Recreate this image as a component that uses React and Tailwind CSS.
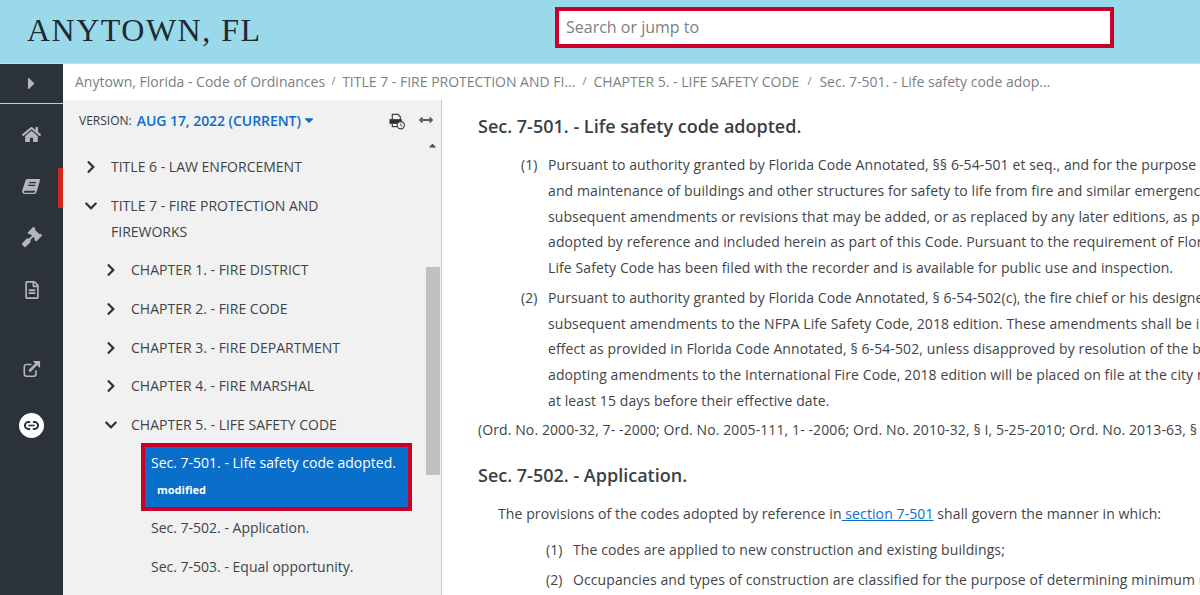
import React from 'react';
import { FaCaretDown, FaCaretRight, FaCaretUp, FaChevronDown, FaChevronRight, FaHome, FaGavel, FaRegFileAlt, FaArrowsAltH } from 'react-icons/fa';

function BookIcon() {
  return (
    <svg viewBox="0 0 20 18" className="w-[19px] h-[17px]" fill="currentColor">
      <path fillRule="evenodd" d="M5.500 1h12.300c.9 0 1.400.7 1.100 1.600l-3.300 11.600c-.4 1.400-1.500 2.800-3 2.800H3c-1.700 0-3-1.300-2.900-3 .1-.6.2-1.200.4-1.800L3.700 2.600C4 1.700 4.600 1 5.500 1zM7.600 4.300l-.4 1.300h7.400l.4-1.300zM6.700 7.200l-.4 1.300h7.400l.4-1.300zM3.400 13.400c-1 0-1.300.5-1.300 1.100 0 .6.400 1 1.100 1h9.100c.8 0 1.200-.5 1.400-1.100l.2-1z" />
    </svg>
  );
}

function ExternalIcon() {
  return (
    <svg viewBox="0 0 20 20" className="w-[19px] h-[18px]" fill="none" stroke="currentColor">
      <path d="M15 11.500v4a2.500 2.500 0 0 1-2.500 2.500h-8A2.500 2.500 0 0 1 2 15.500v-8A2.500 2.500 0 0 1 4.500 5H10" strokeWidth="1.800" />
      <path d="M7.500 12.500l8.500-8.500" strokeWidth="3" />
      <path d="M11.500 1H19.500v8z" fill="currentColor" stroke="none" />
    </svg>
  );
}

function LinkBadge() {
  return (
    <div className="w-[25px] h-[25px] rounded-full bg-white flex items-center justify-center">
      <svg viewBox="0 0 16 10" className="w-[15px] h-[9px]" fill="none" stroke="#2b323a">
        <path d="M6.500 1.200H4.500a3.800 3.800 0 0 0 0 7.600h2M9.500 1.200h2a3.800 3.800 0 0 1 0 7.600h-2" strokeWidth="2.200" />
        <path d="M4.500 5h7" strokeWidth="1.800" />
      </svg>
    </div>
  );
}

function PrintIcon() {
  return (
    <svg viewBox="0 0 18 18" className="w-[17px] h-[17px]" fill="none">
      <path d="M3.500 7V1.500h6l2.500 2.500v3" stroke="#3f4448" strokeWidth="1.300" />
      <rect x="0.500" y="6.500" width="13" height="5" fill="#2b323a" />
      <path d="M3.500 11.500v3h5" stroke="#3f4448" strokeWidth="1.300" />
      <circle cx="12.500" cy="13" r="3.800" fill="#f1f1f1" stroke="#3f4448" strokeWidth="1.200" />
      <path d="M12.500 11v2.300l1.500 1" stroke="#3f4448" />
    </svg>
  );
}

function RailIcon({ children, className = '' }) {
  return <div className={`flex justify-center text-[#b4b6b8] ${className}`}>{children}</div>;
}

function Sidebar() {
  return (
    <aside className="w-[63px] shrink-0 bg-[#2b323a] flex flex-col">
      <div className="h-[40px] flex items-center justify-center border-b border-[#c9cbcd] text-[#b4b6b8]">
        <FaCaretRight size={19} />
      </div>
      <RailIcon className="h-[19px] mt-[21px]"><FaHome size={19} /></RailIcon>
      <div className="relative mt-[24px] h-[40px]">
        <RailIcon className="pt-[10px]"><BookIcon /></RailIcon>
        <div className="absolute right-0 top-0 w-[5px] h-[40px] bg-[#d0291c]" />
      </div>
      <RailIcon className="h-[20px] mt-[19px]"><FaGavel size={20} /></RailIcon>
      <RailIcon className="h-[18px] mt-[34px]"><FaRegFileAlt size={18} /></RailIcon>
      <RailIcon className="h-[18px] mt-[61px]"><ExternalIcon /></RailIcon>
      <div className="flex justify-center mt-[35px]"><LinkBadge /></div>
    </aside>
  );
}

function TreeRow({ open, indent, lines }) {
  const Chevron = open ? FaChevronDown : FaChevronRight;
  return (
    <div className={`flex py-[6.4px] leading-[26px] text-[14px] text-[#3f4448] ${indent ? 'pl-[41px]' : 'pl-[21px]'}`}>
      <span className="w-[27px] shrink-0 h-[26px] flex items-center text-[#2b323a]">
        <Chevron size={14} />
      </span>
      <span>
        {lines.map((l) => <div key={l}>{l}</div>)}
      </span>
    </div>
  );
}

function TreePanel() {
  return (
    <div className="relative w-[379px] shrink-0 bg-[#f1f1f1] border-r border-[#c8c8c8] overflow-hidden">
      <div className="flex items-center h-[40px] pl-[16px] pr-[8px]">
        <span className="text-[12px] text-[#333a40] mr-[5px] mt-[1px]">VERSION:</span>
        <span className="text-[14px] text-[#0a6ecb] font-semibold tracking-[-0.05px] mt-[1px]">AUG 17, 2022 (CURRENT)</span>
        <FaCaretDown size={14} className="text-[#0a6ecb] ml-[1px]" />
        <span className="ml-auto mr-[13px] mt-[2px]"><PrintIcon /></span>
        <FaArrowsAltH size={14} className="text-[#5a5f63]" />
      </div>
      <div className="pt-[8px]">
        <TreeRow lines={['TITLE 6 - LAW ENFORCEMENT']} />
        <div className="mb-[-1px]">
          <TreeRow open lines={['TITLE 7 - FIRE PROTECTION AND', 'FIREWORKS']} />
        </div>
        <TreeRow indent lines={['CHAPTER 1. - FIRE DISTRICT']} />
        <TreeRow indent lines={['CHAPTER 2. - FIRE CODE']} />
        <TreeRow indent lines={['CHAPTER 3. - FIRE DEPARTMENT']} />
        <TreeRow indent lines={['CHAPTER 4. - FIRE MARSHAL']} />
        <TreeRow indent open lines={['CHAPTER 5. - LIFE SAFETY CODE']} />
        <div className="ml-[78px] w-[271px] h-[68px] mt-[-1px] border-4 border-[#c8002a] bg-[#0a6ecb] text-white pl-[6px]">
          <div className="text-[14px] leading-[26px] mt-[3px] whitespace-nowrap">Sec. 7-501. - Life safety code adopted.</div>
          <div className="text-[11px] font-bold leading-[14px] pl-[6px] mt-[7px]">modified</div>
        </div>
        <div className="ml-[88px] mt-[4px] text-[14px] leading-[26px] text-[#3f4448]">Sec. 7-502. - Application.</div>
        <div className="ml-[88px] mt-[13px] text-[14px] leading-[26px] text-[#3f4448]">Sec. 7-503. - Equal opportunity.</div>
      </div>
      {/* scrollbar sits over the tree */}
      <FaCaretUp size={11} className="absolute left-[364px] top-[40px] text-[#4a4a4a]" />
      <div className="absolute left-[363px] top-[167px] w-[14px] h-[208px] bg-[#c1c1c1]" />
    </div>
  );
}

function Clause({ num, lines, numLeft = 'pl-[43px]' }) {
  return (
    <div className={`flex ${numLeft}`}>
      <span className="w-[27px] shrink-0 tracking-normal">{num}</span>
      <div>
        {lines.map((l) => <div key={l} className="whitespace-nowrap">{l}</div>)}
      </div>
    </div>
  );
}

function Content() {
  return (
    <main className="flex-1 min-w-0 overflow-hidden bg-white pl-[36px] text-[14px] leading-[25.750px] tracking-[0.1px] text-[#3f4448]">
      <h2 className="text-[18px] tracking-normal font-semibold text-[#3a3f44] mt-[13px] leading-[26px]">Sec. 7-501. - Life safety code adopted.</h2>
      <div className="mt-[13px]">
        <Clause num="(1)" lines={[
          'Pursuant to authority granted by Florida Code Annotated, §§ 6-54-501 et seq., and for the purpose of providing for the inspection',
          'and maintenance of buildings and other structures for safety to life from fire and similar emergencies, the city adopts the code,',
          'subsequent amendments or revisions that may be added, or as replaced by any later editions, as provided by the state, and is',
          'adopted by reference and included herein as part of this Code. Pursuant to the requirement of Florida Code Annotated, a copy of the',
          'Life Safety Code has been filed with the recorder and is available for public use and inspection.',
        ]} />
        <div className="mt-[4px]">
          <Clause num="(2)" lines={[
            'Pursuant to authority granted by Florida Code Annotated, § 6-54-502(c), the fire chief or his designee may adopt',
            'subsequent amendments to the NFPA Life Safety Code, 2018 edition. These amendments shall be in full force and',
            'effect as provided in Florida Code Annotated, § 6-54-502, unless disapproved by resolution of the board. Notice of',
            'adopting amendments to the International Fire Code, 2018 edition will be placed on file at the city recorder office',
            'at least 15 days before their effective date.',
          ]} />
        </div>
      </div>
      <p className="mt-[3px] whitespace-nowrap">(Ord. No. 2000-32, 7- -2000; Ord. No. 2005-111, 1- -2006; Ord. No. 2010-32, § I, 5-25-2010; Ord. No. 2013-63, § I, 2013)</p>
      <h2 className="text-[18px] tracking-normal font-semibold text-[#3a3f44] mt-[20px] leading-[26px]">Sec. 7-502. - Application.</h2>
      <p className="mt-[13px] pl-[20px] whitespace-nowrap">The provisions of the codes adopted by reference in<a className="text-[#0a6ecb] underline"> section 7-501</a> shall govern the manner in which:</p>
      <div className="mt-[10px]">
        <Clause numLeft="pl-[68px]" num="(1)" lines={['The codes are applied to new construction and existing buildings;']} />
        <div className="mt-[4px]">
          <Clause numLeft="pl-[68px]" num="(2)" lines={['Occupancies and types of construction are classified for the purpose of determining minimum requirements;']} />
        </div>
      </div>
    </main>
  );
}

export default function App() {
  return (
    <div className="h-[595px] w-[1200px] overflow-hidden flex flex-col font-['Open_Sans',sans-serif] bg-white">
      <header className="h-[64px] shrink-0 bg-[#99d9ea] flex items-center border-b border-[#d5dcdf]">
        <div className="w-[555px] pl-[27px] font-['Liberation_Serif',serif] text-[32px] text-[#1f2a30] tracking-[1.500px] leading-none mt-[-3px]">ANYTOWN, FL</div>
        <div className="w-[559px] h-[41px] mt-[-9px] border-4 border-[#c8002a] bg-white flex items-center pl-[7px] text-[16px] text-[#7b7f83]">Search or jump to</div>
      </header>
      <div className="flex flex-1 min-h-0">
        <Sidebar />
        <div className="flex-1 min-w-0 flex flex-col">
          <nav className="h-[36px] shrink-0 bg-white flex items-center pl-[12px] pb-[2px] text-[14px] text-[#7b7f83] whitespace-nowrap">
            <span>Anytown, Florida - Code of Ordinances</span>
            <span className="text-[11px] mx-[6.500px]">/</span>
            <span>TITLE 7 - FIRE PROTECTION AND FI...</span>
            <span className="text-[11px] mx-[7px]">/</span>
            <span>CHAPTER 5. - LIFE SAFETY CODE</span>
            <span className="text-[11px] mx-[8px]">/</span>
            <span>Sec. 7-501. - Life safety code adop...</span>
          </nav>
          <div className="flex flex-1 min-h-0">
            <TreePanel />
            <Content />
          </div>
        </div>
      </div>
    </div>
  );
}
